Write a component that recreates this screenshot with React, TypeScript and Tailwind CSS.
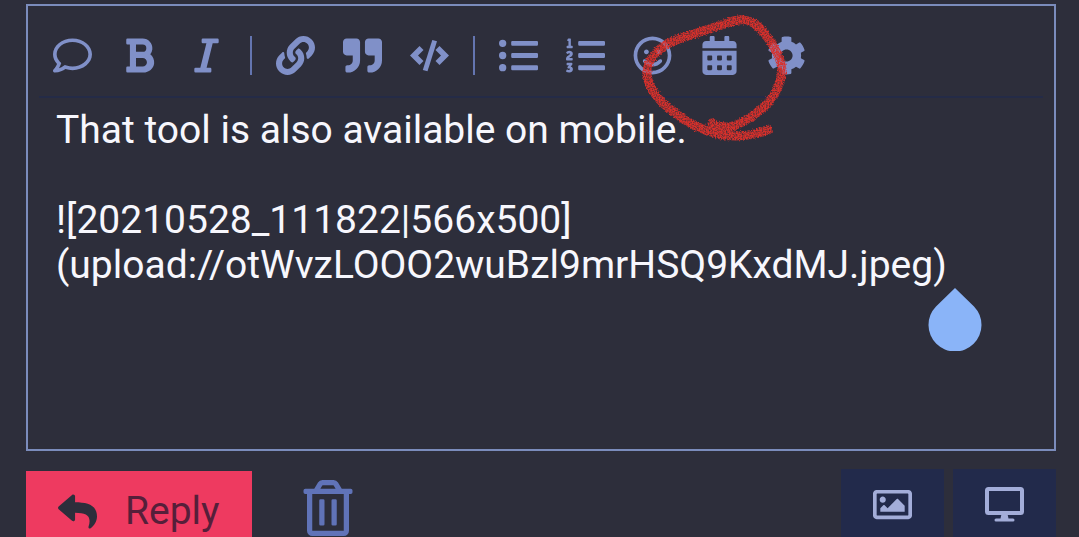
import React, { useState } from "react";
import {
  FaBold,
  FaCalendarAlt,
  FaCog,
  FaItalic,
  FaLink,
  FaListOl,
  FaListUl,
  FaQuoteRight,
  FaRegComment,
  FaRegImage,
  FaRegSmile,
  FaRegTrashAlt,
  FaReply,
} from "react-icons/fa";

const CodeIcon = () => (
  <svg viewBox="0 0 39 39" width="1em" height="1em" fill="currentColor">
    <path d="M0 19.500 9.500 10 13.500 14 8 19.500l5.500 5.500-4 4z" />
    <path d="M39 19.500 29.500 10 25.500 14l5.500 5.500-5.500 5.500 4 4z" />
    <path d="M22.300 4 27 5.200 17.500 35.200 12.800 34z" />
  </svg>
);

const DesktopIcon = () => (
  <svg viewBox="0 0 39 35" className="h-[35px] w-[39px]" fill="none" stroke="currentColor">
    <rect x="2" y="2" width="35" height="24" rx="1.500" strokeWidth="4" />
    <path
      d="M16.500 27h6l1 4.500h4.500a1.500 1.500 0 0 1 0 3h-17a1.500 1.500 0 0 1 0-3h4.500z"
      fill="currentColor"
      stroke="none"
    />
  </svg>
);

const groups = [
  [
    { label: "Toggle quote", Icon: FaRegComment },
    { label: "Bold", Icon: FaBold },
    { label: "Italic", Icon: FaItalic },
  ],
  [
    { label: "Link", Icon: FaLink },
    { label: "Blockquote", Icon: FaQuoteRight },
    { label: "Code", Icon: CodeIcon },
  ],
  [
    { label: "Bulleted list", Icon: FaListUl },
    { label: "Numbered list", Icon: FaListOl },
    { label: "Emoji", Icon: FaRegSmile },
    { label: "Insert date", Icon: FaCalendarAlt },
    { label: "Options", Icon: FaCog },
  ],
];

const initialText = `That tool is also available on mobile.

![20210528_111822|566x500]
(upload://otWvzLOOO2wuBzl9mrHSQ9KxdMJ.jpeg)`;

// hand-drawn crayon ring around the date button
const CrayonRing = () => (
  <svg
    viewBox="0 0 160 144"
    className="pointer-events-none absolute -left-12 -top-9 z-10 h-36 w-40 max-w-none"
    fill="none"
    aria-hidden="true"
  >
    <defs>
      <filter id="crayon" x="-10%" y="-10%" width="120%" height="120%" colorInterpolationFilters="sRGB">
        <feTurbulence type="fractalNoise" baseFrequency="0.7" numOctaves="2" seed="4" result="noise" />
        <feDisplacementMap
          in="SourceGraphic"
          in2="noise"
          scale="4"
          xChannelSelector="R"
          yChannelSelector="G"
          result="rough"
        />
        <feColorMatrix
          in="noise"
          type="matrix"
          values="0 0 0 0 0  0 0 0 0 0  0 0 0 0 0  0 0 0 -2 1.8"
          result="grain"
        />
        <feComposite in="rough" in2="grain" operator="in" result="crayon" />
        <feGaussianBlur in="crayon" stdDeviation="0.5" />
      </filter>
    </defs>
    <path
      d="M130 130C115 136 100 137 84 135C66 131 51 125 36 112C22 102 10 89 9 74C8 60 20 47 38 40C58 33 78 27 95 21C110 17 118 23 127 34C137 47 144 60 144 72C142 88 133 102 122 110C112 119 98 127 88 127C80 127 77 125 74 123"
      stroke="#d8302b"
      strokeWidth="9"
      strokeLinecap="round"
      filter="url(#crayon)"
    />
  </svg>
);

const App = () => {
  const [text, setText] = useState(initialText);

  return (
    <main className="h-screen overflow-hidden bg-[#2d2e3b] pl-[26px] pr-[23px] pt-1 font-['Roboto',sans-serif]">
      <div className="relative border-2 border-[#7b8cbc]">
        <div className="mx-[11px] flex h-[92px] items-center border-b-2 border-[#242b47] pb-1 pt-3 text-[39px] text-[#8090c8]">
          {groups.map((group, i) => (
            <React.Fragment key={i}>
              {i > 0 && <span className="mx-[10px] h-[39px] w-[2px] bg-[#6475b0]" />}
              {group.map(({ label, Icon }) => (
                <div key={label} className="relative flex">
                  <button type="button" aria-label={label} className="flex w-[67px] items-center justify-center">
                    <Icon />
                  </button>
                  {label === "Insert date" && <CrayonRing />}
                </div>
              ))}
            </React.Fragment>
          ))}
        </div>
        <textarea
          aria-label="Reply text"
          className="block h-[351px] w-full resize-none bg-transparent px-7 pt-[10px] text-[39px] leading-[45px] text-[#f7f7fd] outline-none"
          spellCheck={false}
          value={text}
          onChange={(e) => setText(e.target.value)}
        />
        <svg viewBox="0 0 54 63" className="absolute right-[72px] top-[282px] h-[63px] w-[54px]" aria-hidden="true">
          <path d="M27 0 46 18.500A26.500 26.500 0 1 1 8 18.500Z" fill="#8ab4f8" />
        </svg>
      </div>

      <div className="mt-[18px] flex items-start">
        <button
          type="button"
          className="mt-[2px] flex h-20 w-[226px] items-center gap-7 bg-[#ee3a60] pl-8 text-[39px] text-[#2d2e3b]"
        >
          <FaReply />
          <span className="text-[#561f3a]">Reply</span>
        </button>
        <button type="button" aria-label="Discard" className="ml-12 mt-[11px] text-[56px] text-[#6073b8]">
          <FaRegTrashAlt />
        </button>
        <div className="ml-auto flex gap-[9px] text-[39px] text-[#a3add9]">
          <button
            type="button"
            aria-label="Upload image"
            className="flex h-[70px] w-[103px] items-center justify-center bg-[#222a4b]"
          >
            <FaRegImage />
          </button>
          <button
            type="button"
            aria-label="Toggle preview"
            className="flex h-[70px] w-[103px] items-center justify-center bg-[#222a4b]"
          >
            <DesktopIcon />
          </button>
        </div>
      </div>
    </main>
  );
};

export default App;
